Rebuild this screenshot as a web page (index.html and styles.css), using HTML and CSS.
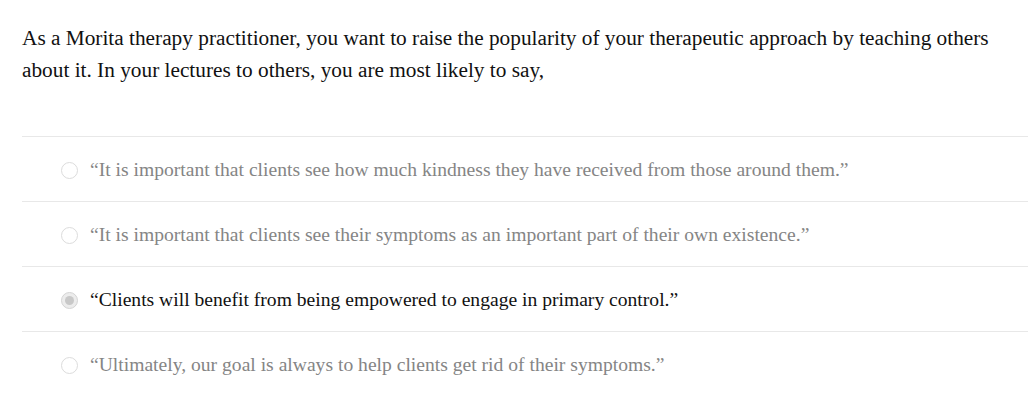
FILE: index.html
```html
<!DOCTYPE html>
<html>
<head>
<meta charset="utf-8">
<link rel="stylesheet" href="styles.css">
</head>
<body>
<div class="question">
  <p class="prompt">As a Morita therapy practitioner, you want to raise the popularity of your therapeutic approach by teaching others about it. In your lectures to others, you are most likely to say,</p>
  <ul class="options">
    <li class="option"><span class="radio"></span><span class="label">“It is important that clients see how much kindness they have received from those around them.”</span></li>
    <li class="option"><span class="radio"></span><span class="label">“It is important that clients see their symptoms as an important part of their own existence.”</span></li>
    <li class="option selected"><span class="radio"></span><span class="label">“Clients will benefit from being empowered to engage in primary control.”</span></li>
    <li class="option"><span class="radio"></span><span class="label">“Ultimately, our goal is always to help clients get rid of their symptoms.”</span></li>
  </ul>
</div>
</body>
</html>
```
FILE: styles.css
```css
html, body {
  margin: 0;
  padding: 0;
  background: #ffffff;
}
body {
  font-family: "Liberation Serif", "Times New Roman", serif;
  color: #111;
}
.question {
  padding: 22px 0 0 22px;
}
.prompt {
  margin: 0 30px 0 0;
  font-size: 21.3px;
  line-height: 32px;
}
.options {
  list-style: none;
  margin: 50px 0 0 0;
  padding: 0;
}
.option {
  display: flex;
  align-items: center;
  box-sizing: border-box;
  height: 65px;
  padding-top: 2px;
  border-top: 1px solid #e8e8e8;
  padding-left: 39px;
}
.radio {
  box-sizing: border-box;
  width: 17px;
  height: 17px;
  border-radius: 50%;
  border: 1px solid #dcdcdc;
  background: #fff;
  flex: none;
  margin-right: 12px;
  position: relative;
}
.selected .radio {
  border-color: #d4d4d4;
  background: #ececec;
}
.selected .radio::after {
  content: "";
  position: absolute;
  left: 3px;
  top: 3px;
  width: 9px;
  height: 9px;
  border-radius: 50%;
  background: #c8c8c8;
}
.label {
  font-size: 19.6px;
  color: #858585;
}
.selected .label {
  color: #111;
}
```
